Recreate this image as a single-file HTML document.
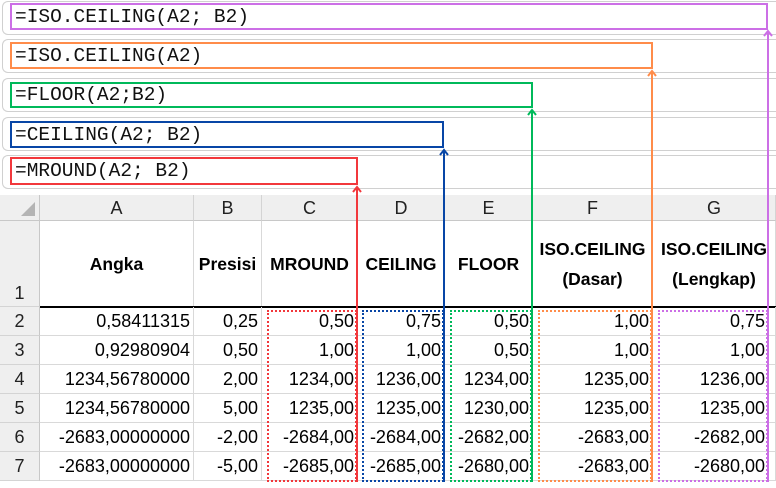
<!DOCTYPE html>
<html><head><meta charset="utf-8"><style>
*{margin:0;padding:0;box-sizing:border-box}
body{width:776px;height:488px;background:#fff;position:relative;overflow:hidden;font-family:"Liberation Sans",Arial,sans-serif;color:#000}
.a{position:absolute}
.fb{position:absolute;left:2px;right:-10px;border:1px solid #d0d0d0;border-right:none;border-radius:6px 0 0 6px;background:#fff}
.fx{position:absolute;left:10px;border:2px solid;font-family:"Liberation Mono",monospace;font-size:19.5px;padding-left:3px;color:#111;display:flex;align-items:center;white-space:nowrap}
.hd{position:absolute;background:#efefef;border-right:1px solid #d4d4d4;border-bottom:1px solid #c8c8c8;text-align:center;font-size:18px;line-height:26px;color:#222}
.rh{position:absolute;left:0;width:40px;background:#efefef;border-right:1px solid #c8c8c8;border-bottom:1px solid #d4d4d4;text-align:center;font-size:18px;color:#222}
.c{position:absolute;border-right:1px solid #d9d9d9;border-bottom:1px solid #d9d9d9;font-size:18px;text-align:right;padding-right:3px;line-height:29px;white-space:nowrap}
.h{position:absolute;border-right:1px solid #d9d9d9;font-weight:bold;font-size:17.5px;text-align:center;display:flex;align-items:center;justify-content:center;line-height:30px;white-space:nowrap}
.v{position:absolute;width:2px}
.dot{position:absolute;border:2px dotted;top:310px;height:172px}
</style></head><body>
<div class="fb" style="top:1px;height:34px"></div>
<div class="fb" style="top:39px;height:34px"></div>
<div class="fb" style="top:78px;height:34px"></div>
<div class="fb" style="top:117px;height:34px"></div>
<div class="fb" style="top:155px;height:34px"></div>
<div class="fx" style="top:3px;width:758px;height:27px;border-color:#cc6fe6">=ISO.CEILING(A2; B2)</div>
<div class="fx" style="top:42px;width:643px;height:27px;border-color:#ff8c4a">=ISO.CEILING(A2)</div>
<div class="fx" style="top:82px;width:523px;height:26px;border-color:#00b95a">=FLOOR(A2;B2)</div>
<div class="fx" style="top:121px;width:434px;height:27px;border-color:#0846a6">=CEILING(A2; B2)</div>
<div class="fx" style="top:157px;width:348px;height:28px;border-color:#f2383c">=MROUND(A2; B2)</div>
<div class="a" style="top:192px;left:0;width:776px;height:296px;background:#fff"></div>
<div class="hd" style="left:0;top:195px;width:40px;height:26px;border-right-color:#c8c8c8"><div style="position:absolute;right:4px;bottom:4px;width:0;height:0;border-left:14px solid transparent;border-bottom:14px solid #b4b4b4"></div></div>
<div class="hd" style="left:40px;top:195px;width:154px;height:26px">A</div>
<div class="hd" style="left:194px;top:195px;width:68px;height:26px">B</div>
<div class="hd" style="left:262px;top:195px;width:96px;height:26px">C</div>
<div class="hd" style="left:358px;top:195px;width:87px;height:26px">D</div>
<div class="hd" style="left:445px;top:195px;width:88px;height:26px">E</div>
<div class="hd" style="left:533px;top:195px;width:120px;height:26px">F</div>
<div class="hd" style="left:653px;top:195px;width:123px;height:26px">G</div>
<div class="rh" style="top:221px;height:86px;line-height:26px;padding-top:59px">1</div>
<div class="rh" style="top:307px;height:29px;line-height:29px">2</div>
<div class="rh" style="top:336px;height:29px;line-height:29px">3</div>
<div class="rh" style="top:365px;height:29px;line-height:29px">4</div>
<div class="rh" style="top:394px;height:29px;line-height:29px">5</div>
<div class="rh" style="top:423px;height:29px;line-height:29px">6</div>
<div class="rh" style="top:452px;height:29px;line-height:29px">7</div>
<div class="h" style="left:40px;top:221px;width:154px;height:86px">Angka</div>
<div class="h" style="left:194px;top:221px;width:68px;height:86px">Presisi</div>
<div class="h" style="left:262px;top:221px;width:96px;height:86px">MROUND</div>
<div class="h" style="left:358px;top:221px;width:87px;height:86px">CEILING</div>
<div class="h" style="left:445px;top:221px;width:88px;height:86px">FLOOR</div>
<div class="h" style="left:533px;top:221px;width:120px;height:86px">ISO.CEILING<br>(Dasar)</div>
<div class="h" style="left:653px;top:221px;width:123px;height:86px">ISO.CEILING<br>(Lengkap)</div>
<div class="a" style="left:40px;top:306px;width:736px;height:2px;background:#000"></div>

<div class="c" style="left:40px;top:307px;width:154px;height:29px">0,58411315</div><div class="c" style="left:194px;top:307px;width:68px;height:29px">0,25</div><div class="c" style="left:262px;top:307px;width:96px;height:29px">0,50</div><div class="c" style="left:358px;top:307px;width:87px;height:29px">0,75</div><div class="c" style="left:445px;top:307px;width:88px;height:29px">0,50</div><div class="c" style="left:533px;top:307px;width:120px;height:29px">1,00</div><div class="c" style="left:653px;top:307px;width:123px;height:29px;padding-right:10px">0,75</div>
<div class="c" style="left:40px;top:336px;width:154px;height:29px">0,92980904</div><div class="c" style="left:194px;top:336px;width:68px;height:29px">0,50</div><div class="c" style="left:262px;top:336px;width:96px;height:29px">1,00</div><div class="c" style="left:358px;top:336px;width:87px;height:29px">1,00</div><div class="c" style="left:445px;top:336px;width:88px;height:29px">0,50</div><div class="c" style="left:533px;top:336px;width:120px;height:29px">1,00</div><div class="c" style="left:653px;top:336px;width:123px;height:29px;padding-right:10px">1,00</div>
<div class="c" style="left:40px;top:365px;width:154px;height:29px">1234,56780000</div><div class="c" style="left:194px;top:365px;width:68px;height:29px">2,00</div><div class="c" style="left:262px;top:365px;width:96px;height:29px">1234,00</div><div class="c" style="left:358px;top:365px;width:87px;height:29px">1236,00</div><div class="c" style="left:445px;top:365px;width:88px;height:29px">1234,00</div><div class="c" style="left:533px;top:365px;width:120px;height:29px">1235,00</div><div class="c" style="left:653px;top:365px;width:123px;height:29px;padding-right:10px">1236,00</div>
<div class="c" style="left:40px;top:394px;width:154px;height:29px">1234,56780000</div><div class="c" style="left:194px;top:394px;width:68px;height:29px">5,00</div><div class="c" style="left:262px;top:394px;width:96px;height:29px">1235,00</div><div class="c" style="left:358px;top:394px;width:87px;height:29px">1235,00</div><div class="c" style="left:445px;top:394px;width:88px;height:29px">1230,00</div><div class="c" style="left:533px;top:394px;width:120px;height:29px">1235,00</div><div class="c" style="left:653px;top:394px;width:123px;height:29px;padding-right:10px">1235,00</div>
<div class="c" style="left:40px;top:423px;width:154px;height:29px">-2683,00000000</div><div class="c" style="left:194px;top:423px;width:68px;height:29px">-2,00</div><div class="c" style="left:262px;top:423px;width:96px;height:29px">-2684,00</div><div class="c" style="left:358px;top:423px;width:87px;height:29px">-2684,00</div><div class="c" style="left:445px;top:423px;width:88px;height:29px">-2682,00</div><div class="c" style="left:533px;top:423px;width:120px;height:29px">-2683,00</div><div class="c" style="left:653px;top:423px;width:123px;height:29px;padding-right:10px">-2682,00</div>
<div class="c" style="left:40px;top:452px;width:154px;height:29px">-2683,00000000</div><div class="c" style="left:194px;top:452px;width:68px;height:29px">-5,00</div><div class="c" style="left:262px;top:452px;width:96px;height:29px">-2685,00</div><div class="c" style="left:358px;top:452px;width:87px;height:29px">-2685,00</div><div class="c" style="left:445px;top:452px;width:88px;height:29px">-2680,00</div><div class="c" style="left:533px;top:452px;width:120px;height:29px">-2683,00</div><div class="c" style="left:653px;top:452px;width:123px;height:29px;padding-right:10px">-2680,00</div>

<div class="dot" style="left:267px;width:90px;border-color:#f2383c"></div>
<div class="dot" style="left:362px;width:82px;border-color:#0846a6"></div>
<div class="dot" style="left:450px;width:82px;border-color:#00b95a"></div>
<div class="dot" style="left:538px;width:114px;border-color:#ff8c4a"></div>
<div class="dot" style="left:658px;width:110px;border-color:#cc6fe6"></div>

<div class="v" style="left:356px;top:188px;height:294px;background:#f2383c"></div>
<div class="v" style="left:443px;top:150px;height:332px;background:#0846a6"></div>
<div class="v" style="left:531px;top:110px;height:372px;background:#00b95a"></div>
<div class="v" style="left:651px;top:71px;height:411px;background:#ff8c4a"></div>
<div class="v" style="left:767px;top:31px;height:451px;background:#cc6fe6"></div>
<svg class="a" style="left:0;top:0" width="776" height="488" fill="none" stroke-width="2">
<path d="M353 192 L357 187 L361 192" stroke="#f2383c"/>
<path d="M440 155 L444 150 L448 155" stroke="#0846a6"/>
<path d="M528 115 L532 110 L536 115" stroke="#00b95a"/>
<path d="M648 76 L652 71 L656 76" stroke="#ff8c4a"/>
<path d="M764 36 L768 31 L772 36" stroke="#cc6fe6"/>
</svg>
</body></html>
